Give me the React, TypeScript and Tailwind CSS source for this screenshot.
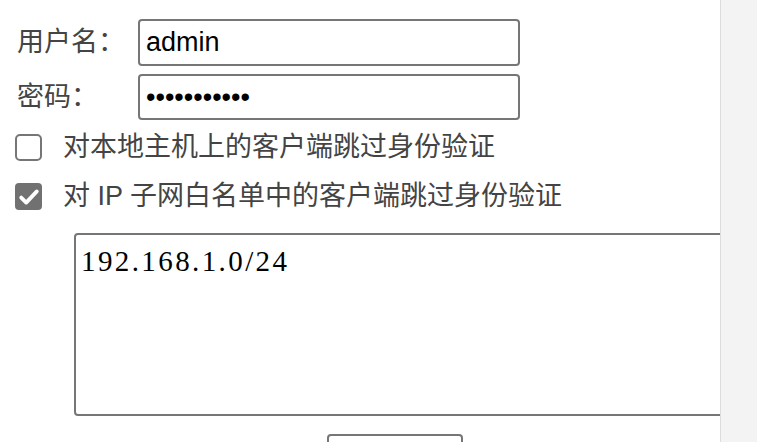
import { useState } from "react";

const sans = { fontFamily: '"Liberation Sans", "Noto Sans CJK SC", sans-serif' };

function Box({ checked, onToggle }: { checked: boolean; onToggle: () => void }) {
  return (
    <button
      type="button"
      onClick={onToggle}
      className={
        checked
          ? "flex h-[27px] w-[27px] shrink-0 items-center justify-center rounded-[4px] bg-[#717171]"
          : "h-[27px] w-[27px] shrink-0 rounded-[5px] border-2 border-[#767676] bg-white"
      }
    >
      {checked && (
        <svg viewBox="0 0 24 24" className="h-[24px] w-[24px]">
          <path d="M4.2 12.6l5 5L19.8 6.4" fill="none" stroke="#fff" strokeWidth="3.8" strokeLinecap="round" strokeLinejoin="round" />
        </svg>
      )}
    </button>
  );
}

export default function App() {
  const [user, setUser] = useState("admin");
  const [pass, setPass] = useState("•••••••••••");
  const [skipLocal, setSkipLocal] = useState(false);
  const [skipSubnet, setSkipSubnet] = useState(true);
  const [subnets, setSubnets] = useState("192.168.1.0/24");

  return (
    <div className="flex h-[442px] w-[757px] overflow-hidden bg-white" style={sans}>
      <div className="w-[720px] shrink-0 overflow-hidden pt-[19px]">
        {/* Credentials */}
        <div className="flex flex-col gap-[8px]">
          <div className="flex items-center">
            <label className="w-[138px] shrink-0 pl-[17px] text-[27px] text-[#444]">用户名：</label>
            <input
              value={user}
              onChange={(e) => setUser(e.target.value)}
              className="h-[47px] w-[382px] rounded-[4px] border-2 border-[#767676] px-[6px] text-[27px] text-black outline-none"
              style={sans}
            />
          </div>
          <div className="flex items-center">
            <label className="w-[138px] shrink-0 pl-[17px] text-[27px] text-[#444]">密码：</label>
            <input
              type="password"
              value={pass}
              onChange={(e) => setPass(e.target.value)}
              className="h-[46px] w-[382px] rounded-[4px] border-2 border-[#767676] px-[6px] text-[27px] text-black outline-none"
              style={sans}
            />
          </div>
        </div>

        {/* Auth bypass options */}
        <div className="mt-[14px] flex flex-col gap-[22px] pl-[15px]">
          <div className="flex items-center gap-[21px]">
            <Box checked={skipLocal} onToggle={() => setSkipLocal(!skipLocal)} />
            <span className="text-[27px] leading-[27px] text-[#444]">对本地主机上的客户端跳过身份验证</span>
          </div>
          <div className="flex items-center gap-[21px]">
            <Box checked={skipSubnet} onToggle={() => setSkipSubnet(!skipSubnet)} />
            <span className="text-[27px] leading-[27px] text-[#444]">对 IP 子网白名单中的客户端跳过身份验证</span>
          </div>
        </div>

        <textarea
          value={subnets}
          onChange={(e) => setSubnets(e.target.value)}
          className="ml-[74px] mt-[23px] block h-[183px] w-[700px] resize-none rounded-[4px] border-2 border-[#767676] p-[5px] text-[29px] tracking-[2.4px] text-black outline-none"
          style={{ fontFamily: '"Liberation Serif", serif' }}
        />

        <button
          type="button"
          className="ml-[327px] mt-[18px] block h-[44px] w-[136px] rounded-[4px] border-2 border-[#767676] bg-white"
        />
      </div>

      {/* Scrollbar track */}
      <div className="h-full flex-1 border-l border-[#dcdcdc] bg-[#f3f3f3]" />
    </div>
  );
}
